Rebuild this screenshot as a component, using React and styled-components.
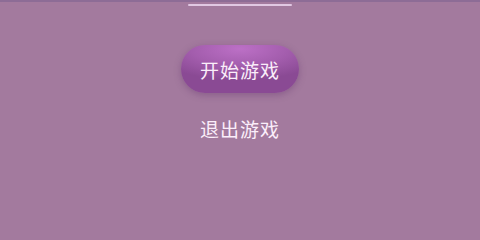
import React from 'react';
import styled, { createGlobalStyle } from 'styled-components';

const GlobalStyle = createGlobalStyle`
  html, body {
    margin: 0;
    padding: 0;
    background: #a37a9e;
  }
  body {
    font-family: "Noto Sans CJK SC", "Noto Sans", sans-serif;
  }
`;

const Screen = styled.div`
  width: 480px;
  height: 218px;
  background: #a37a9e;
  border-top: 2px solid #8d6c96;
  box-sizing: border-box;
  display: flex;
  flex-direction: column;
  align-items: center;
`;

const Handle = styled.div`
  width: 104px;
  height: 2px;
  margin-top: 2px;
  border-radius: 1px;
  background: rgba(236, 214, 238, 0.85);
`;

const Menu = styled.div`
  margin-top: 39px;
  display: flex;
  flex-direction: column;
  align-items: center;
  gap: 22px;
`;

const MenuButton = styled.button`
  font-family: inherit;
  font-size: 19px;
  letter-spacing: 1px;
  color: #fbeefa;
  border: none;
  cursor: pointer;
  width: ${(p) => (p.$primary ? '118px' : 'auto')};
  height: ${(p) => (p.$primary ? '48px' : 'auto')};
  padding: 0;
  border-radius: 24px;
  background: ${(p) =>
    p.$primary
      ? 'radial-gradient(ellipse 75% 65% at 50% 8%, #bc70c6 0%, #a35dad 55%, #8a4a94 100%)'
      : 'transparent'};
  box-shadow: ${(p) =>
    p.$primary ? '0 2px 7px rgba(90, 40, 100, 0.35)' : 'none'};
`;

export default function App() {
  return (
    <>
      <GlobalStyle />
      <Screen>
        <Handle />
        <Menu>
          <MenuButton $primary>开始游戏</MenuButton>
          <MenuButton>退出游戏</MenuButton>
        </Menu>
      </Screen>
    </>
  );
}
